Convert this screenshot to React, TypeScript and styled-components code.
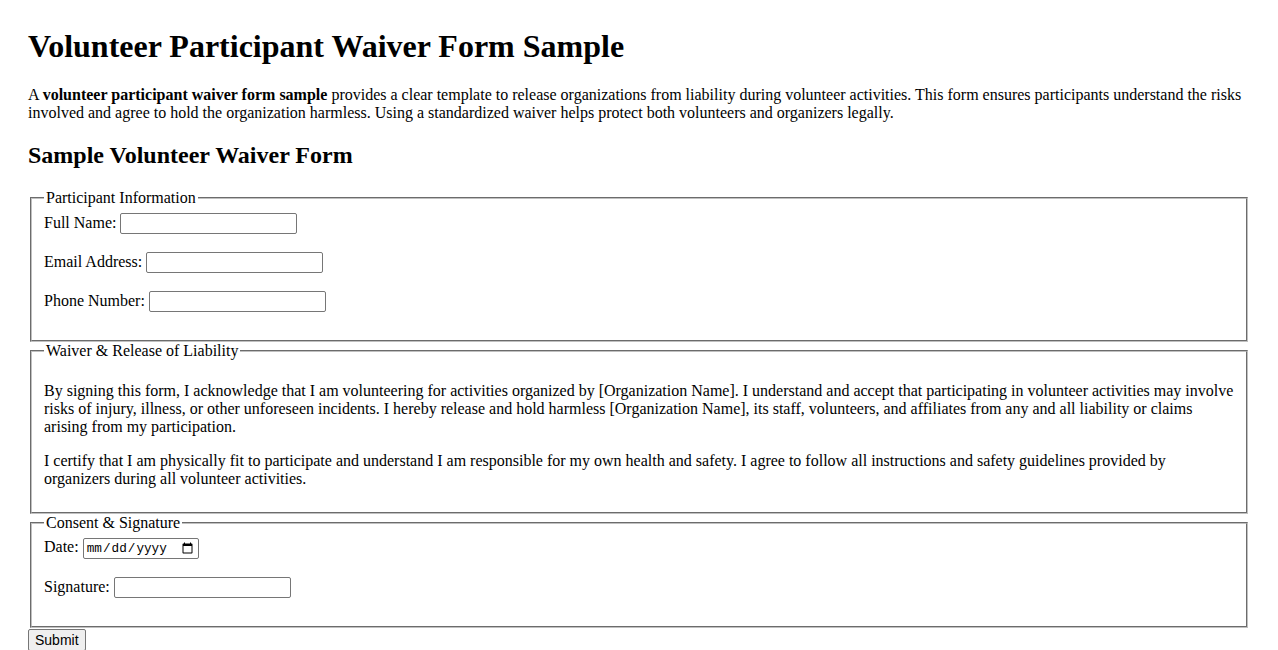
import React from "react";
import styled, { createGlobalStyle } from "styled-components";

const Global = createGlobalStyle`
  html { scrollbar-width: none; }
  html::-webkit-scrollbar { display: none; }
  body {
    margin: 8px;
    background: #ffffff;
    color: #000000;
    font-family: "Liberation Serif", "Times New Roman", serif;
    font-size: 16px;
  }
`;

const Page = styled.main`
  padding: 20px;
`;

const Title = styled.h1`
  font-size: 32px;
  font-weight: bold;
  margin: 0 0 21.44px;
`;

const Intro = styled.p`
  margin: 0 0 19.92px;
  line-height: 18px;
`;

const SubTitle = styled.h2`
  font-size: 24px;
  font-weight: bold;
  margin: 0 0 20px;
`;

const Form = styled.form`
  margin: 0;
`;

const Fieldset = styled.fieldset`
  margin: 0 2px;
  padding: 0.35em 0.75em 0.625em;
  border: 2px groove #c0c0c0;
  min-inline-size: min-content;
`;

const Legend = styled.legend`
  padding: 0 2px;
  line-height: 18px;
`;

const Label = styled.label`
  line-height: 18px;
`;

const TextInput = styled.input`
  box-sizing: border-box;
  width: 177px;
  height: 21px;
  margin: 0 0 0 4px;
  padding: 1px 2px;
  border: 1px solid #767676;
  border-radius: 2px;
  font-family: "Liberation Sans", Arial, sans-serif;
  font-size: 13.33px;
  vertical-align: baseline;
  background: #fff;
`;

const DateInput = styled(TextInput)`
  width: 116px;
  margin-left: 4px;
  font-family: "Liberation Mono", "Courier New", monospace;
  font-size: 12.7px;
  padding: 1px 2px;
  color: #000;
`;

const Para = styled.p`
  margin: 16px 0;
  line-height: 18px;

  &:last-child {
    margin-bottom: 14.5px;
  }
`;

const SubmitButton = styled.button`
  font-family: "Liberation Sans", Arial, sans-serif;
  font-size: 14px;
  padding: 1px 6px;
  height: 22px;
  margin: 1px 0 0;
  border: 1px solid #767676;
  border-radius: 2px;
  background: #efefef;
  color: #000;
`;

export default function App() {
  return (
    <>
      <Global />
      <Page>
        <Title>Volunteer Participant Waiver Form Sample</Title>
        <Intro>
          A <strong>volunteer participant waiver form sample</strong> provides a clear
          template to release organizations from liability during volunteer activities.
          This form ensures participants understand the risks involved and agree to hold
          the organization harmless. Using a standardized waiver helps protect both
          volunteers and organizers legally.
        </Intro>
        <SubTitle>Sample Volunteer Waiver Form</SubTitle>
        <Form onSubmit={(e) => e.preventDefault()}>
          <Fieldset>
            <Legend>Participant Information</Legend>
            <Label htmlFor="fullname">Full Name:</Label>
            <TextInput id="fullname" type="text" />
            <br />
            <br />
            <Label htmlFor="email">Email Address:</Label>
            <TextInput id="email" type="email" />
            <br />
            <br />
            <Label htmlFor="phone">Phone Number:</Label>
            <TextInput id="phone" type="tel" />
            <br />
            <br />
          </Fieldset>
          <Fieldset>
            <Legend>Waiver &amp; Release of Liability</Legend>
            <Para>
              By signing this form, I acknowledge that I am volunteering for activities
              organized by [Organization Name]. I understand and accept that participating
              in volunteer activities may involve risks of injury, illness, or other
              unforeseen incidents. I hereby release and hold harmless [Organization Name],
              its staff, volunteers, and affiliates from any and all liability or claims
              arising from my participation.
            </Para>
            <Para>
              I certify that I am physically fit to participate and understand I am
              responsible for my own health and safety. I agree to follow all instructions
              and safety guidelines provided by organizers during all volunteer activities.
            </Para>
          </Fieldset>
          <Fieldset>
            <Legend>Consent &amp; Signature</Legend>
            <Label htmlFor="date">Date:</Label>
            <DateInput id="date" type="date" />
            <br />
            <br />
            <Label htmlFor="signature">Signature:</Label>
            <TextInput id="signature" type="text" />
            <br />
            <br />
          </Fieldset>
          <SubmitButton type="submit">Submit</SubmitButton>
        </Form>
      </Page>
    </>
  );
}
